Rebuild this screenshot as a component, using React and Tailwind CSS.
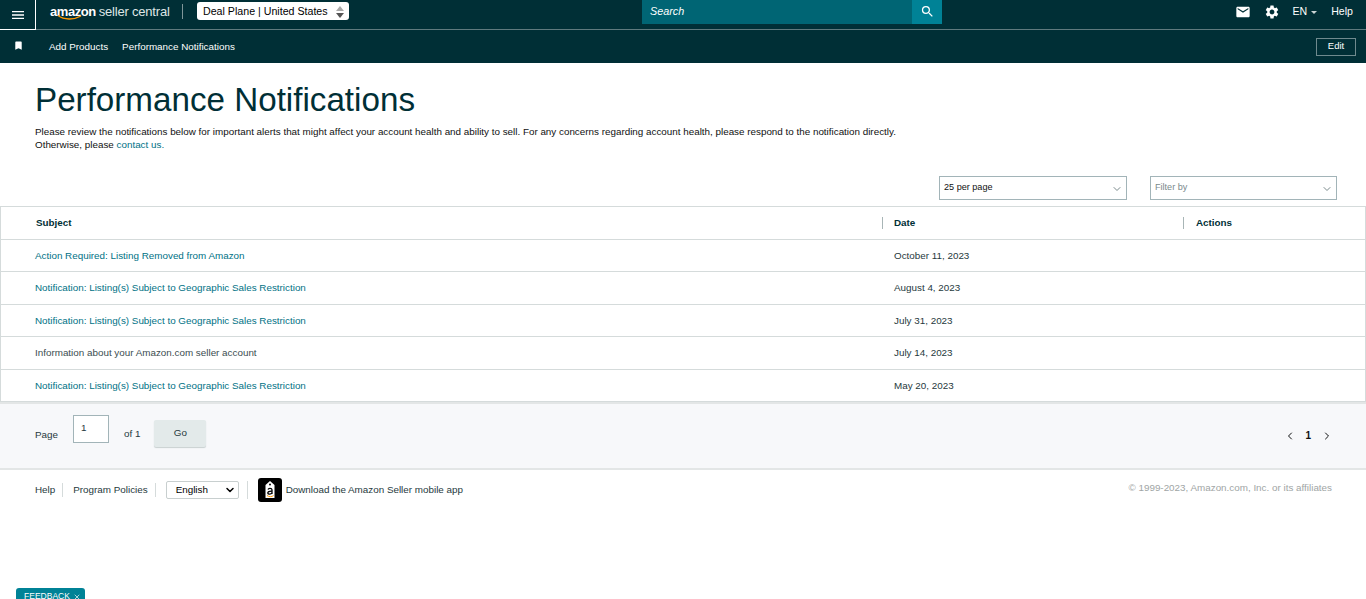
import { ChevronDown, ChevronLeft, ChevronRight, X } from 'lucide-react';
import { MdMenu, MdSearch, MdEmail, MdSettings, MdBookmark } from 'react-icons/md';

const rows = [
  { subject: 'Action Required: Listing Removed from Amazon', date: 'October 11, 2023', link: true },
  { subject: 'Notification: Listing(s) Subject to Geographic Sales Restriction', date: 'August 4, 2023', link: true },
  { subject: 'Notification: Listing(s) Subject to Geographic Sales Restriction', date: 'July 31, 2023', link: true },
  { subject: 'Information about your Amazon.com seller account', date: 'July 14, 2023', link: false },
  { subject: 'Notification: Listing(s) Subject to Geographic Sales Restriction', date: 'May 20, 2023', link: true },
];

function Header() {
  return (
    <header className="bg-[#002f36] text-white">
      <div className="h-[30px] flex items-start border-b border-[#5f7a7e]">
        <div className="w-[36px] h-[30px] border-r border-b border-white flex items-center justify-center">
          <MdMenu className="w-[16px] h-[16px]" aria-hidden="true" />
        </div>
        <div className="relative ml-[14px] w-[120px] h-[22px] flex items-center text-[13px] leading-none whitespace-nowrap">
          <span className="font-bold tracking-[-0.45px]">amazon</span>
          <span className="ml-[3px] text-[#dfe6e6] tracking-[-0.2px]">seller central</span>
          <svg className="absolute left-[7px] top-[14px]" width="26" height="7" viewBox="0 0 26 7" aria-hidden="true">
            <path d="M1 1.5C7 6 17 6 24 2" fill="none" stroke="#f90" strokeWidth="1.4" />
          </svg>
        </div>
        <div className="ml-[12px] mt-[4px] w-px h-[15px] bg-[#7f9699]" />
        <div className="ml-[14px] mt-[2px] w-[152px] h-[18px] bg-white rounded-[3px] flex items-center pl-[6px] pt-px text-[10.65px] text-black whitespace-nowrap">
          <span>Deal Plane | United States</span>
          <div className="ml-auto mr-[3px] w-[12px] h-[16px] flex flex-col items-center justify-center gap-[2px]">
            <span className="w-0 h-0 border-x-[4px] border-x-transparent border-b-[5px] border-b-[#a8a8a8]" />
            <span className="w-0 h-0 border-x-[4px] border-x-transparent border-t-[5px] border-t-[#555]" />
          </div>
        </div>
        <div className="ml-[293px] w-[300px] h-[24px] bg-[#006574] flex items-center">
          <span className="pl-[8px] pb-[2px] text-[10.8px] italic flex-1">Search</span>
          <div className="w-[30px] h-[24px] bg-[#008296] flex items-center justify-center">
            <MdSearch className="w-[15px] h-[15px] mb-px" aria-hidden="true" />
          </div>
        </div>
        <div className="ml-auto h-[23px] flex items-center pr-[13px] text-[10.6px]">
          <MdEmail className="w-[16px] h-[16px]" aria-hidden="true" />
          <MdSettings className="ml-[13px] w-[16px] h-[16px]" aria-hidden="true" />
          <span className="ml-[12px]">EN</span>
          <span className="ml-[4px] mt-px w-0 h-0 border-x-[3px] border-x-transparent border-t-[3px] border-t-[#ccd5d6]" />
          <span className="ml-[14px]">Help</span>
        </div>
      </div>
      <div className="h-[33px] flex items-center text-[9.85px]">
        <MdBookmark className="ml-[13px] w-[11px] h-[11px] mb-[3px]" aria-hidden="true" />
        <span className="ml-[25px] mt-[2px]">Add Products</span>
        <span className="ml-[14px] mt-[2px]">Performance Notifications</span>
        <button className="ml-auto mr-[10px] w-[40px] h-[18px] border border-[#6f8a8e] text-[9.5px] text-white">Edit</button>
      </div>
    </header>
  );
}

function Dropdown({ label, muted, className }) {
  return (
    <div className={`h-[24px] border border-[#a2b4b8] flex items-center justify-between pl-[4px] pr-[3px] ${className}`}>
      <span className={`text-[9.1px] ${muted ? 'text-[#7a8a8c]' : 'text-[#0f1111]'}`}>{label}</span>
      <ChevronDown className="w-[12px] h-[12px] mt-[2px] text-[#7a8a8c]" aria-hidden="true" />
    </div>
  );
}

function NotificationsTable() {
  return (
    <div className="mt-[6px] border border-[#d5dbdb] border-b-0 text-[9.85px]">
      <div className="h-[32.5px] flex items-center font-bold text-[#002f36] border-b border-[#d5dbdb]">
        <div className="w-[881px] pl-[35px] pt-[2px]">Subject</div>
        <div className="w-[301px] border-l border-[#a8b5b6] h-[12px] flex items-center pl-[11px] pt-[2px]">Date</div>
        <div className="flex-1 border-l border-[#a8b5b6] h-[12px] flex items-center pl-[12px] pt-[2px]">Actions</div>
      </div>
      {rows.map((row, i) => (
        <div key={i} className="h-[32.5px] flex items-center border-b border-[#d5dbdb] pt-[2px]">
          <div className={`w-[881px] pl-[34px] ${row.link ? 'text-[#007185]' : 'text-[#3b4d50]'}`}>{row.subject}</div>
          <div className="pl-[12px] text-[#26393d]">{row.date}</div>
        </div>
      ))}
    </div>
  );
}

function Pagination() {
  return (
    <div className="h-[68px] bg-[#f7f8fa] border-y-2 border-[#e3e6e6] flex items-start text-[9.85px] text-[#26393d]">
      <span className="ml-[35px] mt-[24px]">Page</span>
      <div className="ml-[15px] mt-[11px] w-[36px] h-[28px] bg-white border border-[#a2b4b8] pl-[7px] pt-[5px]">1</div>
      <span className="ml-[15px] mt-[23px]">of 1</span>
      <button className="ml-[14px] mt-[16px] w-[52px] h-[27px] bg-[#e3eaea] rounded-[2px] shadow-[0_1px_1px_#c8d0d0]">Go</button>
      <div className="ml-auto mr-[33px] mt-[24px] flex items-center text-[#0f1111]">
        <ChevronLeft className="w-[12px] h-[12px]" strokeWidth={2} aria-hidden="true" />
        <span className="ml-[9px] font-bold text-[10px]">1</span>
        <ChevronRight className="ml-[10px] w-[12px] h-[12px]" strokeWidth={2} aria-hidden="true" />
      </div>
    </div>
  );
}

function Footer() {
  return (
    <footer className="flex items-start pt-[9px] text-[9.85px] text-[#26393d]">
      <div className="ml-[35px] h-[22px] flex items-center">
        <span className="pr-[7px]">Help</span>
        <span className="w-px h-[14px] bg-[#d5dbdb]" />
        <span className="pl-[10px] pr-[7px]">Program Policies</span>
        <span className="w-px h-[14px] bg-[#d5dbdb]" />
        <div className="ml-[10px] w-[73px] h-[18px] border border-[#c8cfcf] rounded-[2px] flex items-center justify-between pl-[9px] pr-[2px] text-black">
          <span>English</span>
          <ChevronDown className="w-[12px] h-[12px]" strokeWidth={3} aria-hidden="true" />
        </div>
        <span className="ml-[8px] w-px h-[18px] bg-[#d5dbdb]" />
        <div className="ml-[10px] w-[24px] h-[24px] bg-black rounded-[3px] flex items-center justify-center">
          <svg width="14" height="20" viewBox="0 0 14 20" aria-hidden="true">
            <path d="M7 1L11.5 5V18H2.5V5Z" fill="#fff" />
            <circle cx="7" cy="4.5" r="1" fill="#000" />
            <path d="M5 9.5C5.5 8 8.8 8 9 9.8V14M9 11.2C6 11 4.6 12 4.8 13.2C5 14.6 8 14.6 9 12.8" fill="none" stroke="#000" strokeWidth="1.3" />
            <path d="M4 15.5C6 17 9 17 10.5 15.5" fill="none" stroke="#f90" strokeWidth="1" />
          </svg>
        </div>
        <span className="ml-[4px]">Download the Amazon Seller mobile app</span>
      </div>
      <span className="ml-auto mr-[34px] mt-[2px] text-[#a0a5a5]">© 1999-2023, Amazon.com, Inc. or its affiliates</span>
    </footer>
  );
}

export default function App() {
  return (
    <div className="relative h-[599px] overflow-hidden bg-white font-['Liberation_Sans',Arial,sans-serif]">
      <Header />
      <main>
        <div className="px-[35px]">
          <h1 className="pt-[16px] text-[33.2px] leading-[42px] text-[#002f36]">Performance Notifications</h1>
          <p className="mt-[4px] text-[9.85px] leading-[13px] text-[#0f1111]">
            Please review the notifications below for important alerts that might affect your account health and ability to sell. For any concerns regarding account health, please respond to the notification directly.
            <br />
            Otherwise, please <span className="text-[#007185]">contact us.</span>
          </p>
        </div>
        <div className="mt-[25px] flex justify-end pr-[29px]">
          <Dropdown label="25 per page" className="w-[188px]" />
          <Dropdown label="Filter by" muted className="ml-[23px] w-[187px]" />
        </div>
        <NotificationsTable />
        <Pagination />
        <Footer />
      </main>
      <div className="absolute left-[16px] top-[588px] w-[69px] h-[14px] bg-[#008296] rounded-t-[3px] flex items-start justify-center pl-[4px] pt-[3px] text-[8.5px] leading-[10px] text-white">
        FEEDBACK
        <X className="ml-[3px] mt-[2px] w-[8px] h-[8px]" aria-hidden="true" />
      </div>
    </div>
  );
}
